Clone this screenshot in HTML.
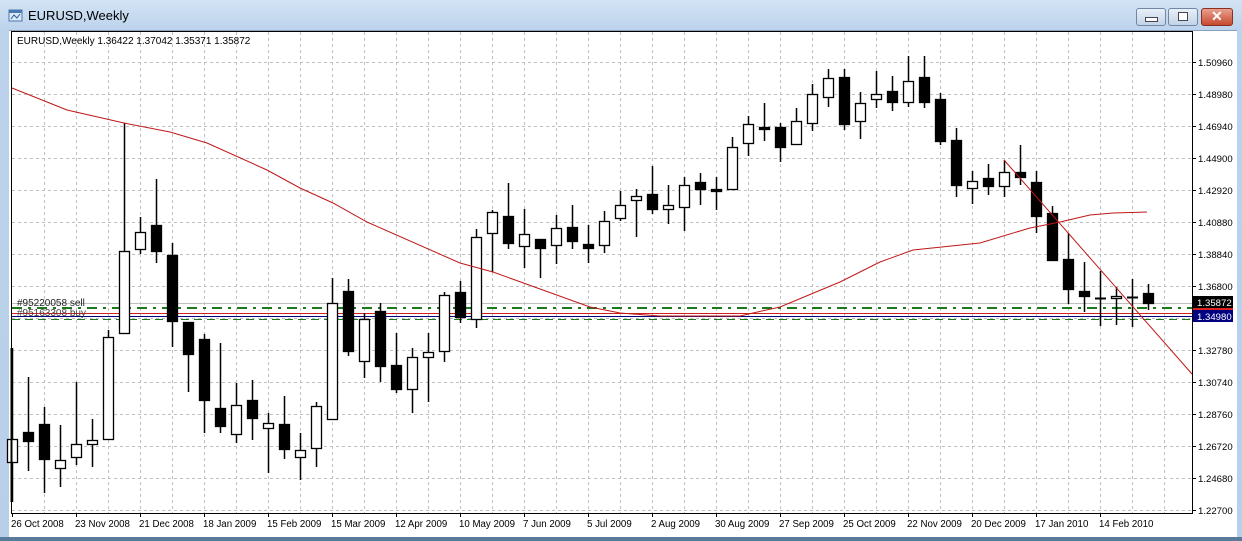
<!DOCTYPE html>
<html><head><meta charset="utf-8"><style>
html,body{margin:0;padding:0;width:1242px;height:541px;overflow:hidden;background:#bcd3ec}
#frame{position:absolute;left:0;top:0;width:1242px;height:541px;background:linear-gradient(#d3e3f4,#bcd3ec 30px,#b8cfe9)}
#title{position:absolute;left:28px;top:8px;font:13px "Liberation Sans",sans-serif;color:#000}
.btn{position:absolute;top:8px;height:16px;border:1px solid #6f86a6;border-radius:3px;background:linear-gradient(#e9f0f8,#c3d3e6)}
svg{position:absolute;left:0;top:0}
</style></head><body>
<div id="frame"></div>
<svg width="16" height="16" style="left:8px;top:8px"><rect x="1" y="2" width="13" height="11" fill="#dfe9f5" stroke="#4a78b0"/><rect x="1" y="2" width="13" height="3" fill="#4a78b0"/><path d="M3 11 L6 7 L9 10 L12 6" stroke="#2a5a9a" fill="none"/></svg>
<div id="title">EURUSD,Weekly</div>
<div class="btn" style="left:1136px;width:28px"><div style="position:absolute;left:8px;top:8px;width:11px;height:3px;background:#fff;border:1px solid #445"></div></div>
<div class="btn" style="left:1168px;width:28px"><div style="position:absolute;left:9px;top:3px;width:8px;height:7px;background:#fff;border:1px solid #445"></div></div>
<div class="btn" style="left:1201px;width:30px;background:linear-gradient(#e8a08e,#c74a30);border-color:#8a3020"><div style="position:absolute;left:9px;top:-1px;color:#fff;font:bold 14px 'Liberation Sans',sans-serif">✕</div></div>
<div style="position:absolute;left:9px;top:30px;width:1228px;height:506px;background:#fff;border-top:1px solid #8aa0bb"></div>
<div style="position:absolute;left:0;top:537px;width:1242px;height:4px;background:#5a7a9a"></div>
<svg id="c" width="1242" height="541" font-family="Liberation Sans, sans-serif" font-size="10.5"></svg>
<script>
var s='';
for(var x=44;x<1192;x+=32)s+='<line x1="'+(x+.5)+'" y1="32" x2="'+(x+.5)+'" y2="513" stroke="#c0c0c0" stroke-dasharray="3,3"/>';
for(var y=62;y<513;y+=32)s+='<line x1="12" y1="'+(y+.5)+'" x2="1192" y2="'+(y+.5)+'" stroke="#c0c0c0" stroke-dasharray="3,3"/>';
s+='<line x1="12" y1="303.5" x2="1192" y2="303.5" stroke="#c0c0c0"/>';
s+='<line x1="12" y1="308" x2="1192" y2="308" stroke="#1a7a1a" stroke-width="2" stroke-dasharray="10,6,3,6"/>';
s+='<line x1="12" y1="313.5" x2="1192" y2="313.5" stroke="#d02020"/>';
s+='<line x1="12" y1="316.5" x2="1192" y2="316.5" stroke="#000080"/>';
s+='<line x1="12" y1="319.5" x2="1192" y2="319.5" stroke="#1a7a1a" stroke-dasharray="8,5"/>';
var d=[[439,462,348,502,1],[432,441,377,471,0],[424,459,407,493,0],[460,468,425,487,1],[444,457,382,465,1],[440,444,419,467,1],[337,439,330,439,1],[251,333,123,333,1],[232,249,217,254,1],[225,251,179,263,0],[255,321,243,347,0],[322,354,322,392,0],[339,400,334,433,0],[408,426,343,433,0],[405,434,383,443,1],[400,418,380,440,0],[423,428,413,473,1],[424,449,396,459,0],[450,457,433,480,1],[406,448,402,467,1],[303,419,278,419,1],[291,351,279,356,0],[319,361,313,378,1],[311,366,303,382,0],[365,389,333,393,0],[357,389,348,413,1],[352,357,333,402,1],[295,351,292,362,1],[292,317,281,323,0],[237,319,229,328,1],[212,233,210,272,1],[216,243,183,249,0],[234,246,209,268,1],[239,248,239,278,0],[228,245,215,264,1],[227,241,205,249,0],[244,248,225,263,0],[221,245,211,253,1],[205,218,191,221,1],[196,200,189,237,1],[194,209,166,214,0],[205,209,185,224,1],[185,207,177,231,1],[182,189,173,205,0],[189,191,177,210,0],[147,189,137,189,1],[124,143,116,156,1],[127,129,103,141,0],[127,147,123,162,0],[121,144,108,145,1],[94,123,84,131,1],[78,97,69,107,1],[77,124,69,130,0],[103,121,92,139,1],[94,99,71,108,1],[91,102,76,111,0],[81,102,56,107,1],[77,102,56,108,0],[99,141,93,145,0],[140,185,128,197,0],[181,188,171,204,1],[178,186,164,195,0],[172,186,160,197,1],[172,177,145,185,0],[182,216,171,233,0],[213,260,206,260,0],[259,289,233,304,0],[291,296,262,312,0],[298,298,271,326,0],[296,298,287,325,1],[297,297,279,327,0],[293,303,284,310,0]];
for(var i=0;i<d.length;i++){var c=d[i],x=12+16*i;
s+='<line x1="'+(x+.5)+'" y1="'+c[2]+'" x2="'+(x+.5)+'" y2="'+c[3]+'" stroke="#000" stroke-width="1.5"/>';
var h=c[1]-c[0];
if(h<2)s+='<line x1="'+(x-5)+'" y1="'+(c[0]+.5)+'" x2="'+(x+6)+'" y2="'+(c[0]+.5)+'" stroke="#000" stroke-width="2"/>';
else s+='<rect x="'+(x-4.5)+'" y="'+(c[0]+.5)+'" width="10" height="'+h+'" fill="'+(c[4]?'#fff':'#000')+'" stroke="#000" stroke-width="1.3"/>';
if(i==0)s+='<line x1="11.5" y1="348" x2="11.5" y2="502" stroke="#000" stroke-width="2"/>';}
s+='<polyline fill="none" stroke="#c01818" points="12,88 67,110 124,123 170,132 207,143 267,170 300,188 333,203 367,222 460,263 493,272 590,307 620,313 660,316 740,316 753,313 780,307 840,282 880,262 913,250 980,243 1030,228 1060,222 1090,215 1113,213 1147,212"/>';
s+='<line x1="1004" y1="160" x2="1192" y2="374" stroke="#c01818"/>';
document.getElementById('c').insertAdjacentHTML('afterbegin',s);
</script>
<svg width="1242" height="541" font-family="Liberation Sans, sans-serif" font-size="10" style="pointer-events:none">
<rect x="11.5" y="31.5" width="1181" height="482" fill="none" stroke="#000"/>
<text x="17" y="44" font-size="10">EURUSD,Weekly  1.36422 1.37042 1.35371 1.35872</text>
<text x="17" y="306" font-size="10" fill="#222">#95220058 sell</text>
<text x="17" y="316" font-size="10" fill="#444">#95163308 buy</text>
<g fill="#000" font-size="9.6">
<text x="1198" y="66">1.50960</text><text x="1198" y="98">1.48980</text><text x="1198" y="130">1.46940</text><text x="1198" y="162">1.44900</text><text x="1198" y="194">1.42920</text><text x="1198" y="226">1.40880</text><text x="1198" y="258">1.38840</text><text x="1198" y="290">1.36800</text><text x="1198" y="354">1.32780</text><text x="1198" y="386">1.30740</text><text x="1198" y="418">1.28760</text><text x="1198" y="450">1.26720</text><text x="1198" y="482">1.24680</text><text x="1198" y="514">1.22700</text>
</g>
<g stroke="#000"><line x1="1192" y1="62.5" x2="1196" y2="62.5"/><line x1="1192" y1="94.5" x2="1196" y2="94.5"/><line x1="1192" y1="126.5" x2="1196" y2="126.5"/><line x1="1192" y1="158.5" x2="1196" y2="158.5"/><line x1="1192" y1="190.5" x2="1196" y2="190.5"/><line x1="1192" y1="222.5" x2="1196" y2="222.5"/><line x1="1192" y1="254.5" x2="1196" y2="254.5"/><line x1="1192" y1="286.5" x2="1196" y2="286.5"/><line x1="1192" y1="350.5" x2="1196" y2="350.5"/><line x1="1192" y1="382.5" x2="1196" y2="382.5"/><line x1="1192" y1="414.5" x2="1196" y2="414.5"/><line x1="1192" y1="446.5" x2="1196" y2="446.5"/><line x1="1192" y1="478.5" x2="1196" y2="478.5"/><line x1="1192" y1="510.5" x2="1196" y2="510.5"/></g>
<rect x="1193" y="296" width="40" height="12" fill="#000"/><text x="1197" y="306" fill="#fff" font-size="9.6">1.35872</text>
<rect x="1193" y="308" width="40" height="3" fill="#e02020"/>
<rect x="1193" y="310" width="40" height="12" fill="#000080"/><text x="1197" y="320" fill="#fff" font-size="9.6">1.34980</text>
<g stroke="#000"><line x1="12.5" y1="513" x2="12.5" y2="517"/><line x1="76.5" y1="513" x2="76.5" y2="517"/><line x1="140.5" y1="513" x2="140.5" y2="517"/><line x1="204.5" y1="513" x2="204.5" y2="517"/><line x1="268.5" y1="513" x2="268.5" y2="517"/><line x1="332.5" y1="513" x2="332.5" y2="517"/><line x1="396.5" y1="513" x2="396.5" y2="517"/><line x1="460.5" y1="513" x2="460.5" y2="517"/><line x1="524.5" y1="513" x2="524.5" y2="517"/><line x1="588.5" y1="513" x2="588.5" y2="517"/><line x1="652.5" y1="513" x2="652.5" y2="517"/><line x1="716.5" y1="513" x2="716.5" y2="517"/><line x1="780.5" y1="513" x2="780.5" y2="517"/><line x1="844.5" y1="513" x2="844.5" y2="517"/><line x1="908.5" y1="513" x2="908.5" y2="517"/><line x1="972.5" y1="513" x2="972.5" y2="517"/><line x1="1036.5" y1="513" x2="1036.5" y2="517"/><line x1="1100.5" y1="513" x2="1100.5" y2="517"/></g>
<g font-size="9.7">
<text x="11" y="527">26 Oct 2008</text><text x="75" y="527">23 Nov 2008</text><text x="139" y="527">21 Dec 2008</text><text x="203" y="527">18 Jan 2009</text><text x="267" y="527">15 Feb 2009</text><text x="331" y="527">15 Mar 2009</text><text x="395" y="527">12 Apr 2009</text><text x="459" y="527">10 May 2009</text><text x="523" y="527">7 Jun 2009</text><text x="587" y="527">5 Jul 2009</text><text x="651" y="527">2 Aug 2009</text><text x="715" y="527">30 Aug 2009</text><text x="779" y="527">27 Sep 2009</text><text x="843" y="527">25 Oct 2009</text><text x="907" y="527">22 Nov 2009</text><text x="971" y="527">20 Dec 2009</text><text x="1035" y="527">17 Jan 2010</text><text x="1099" y="527">14 Feb 2010</text>
</g>
</svg>
</body></html>
